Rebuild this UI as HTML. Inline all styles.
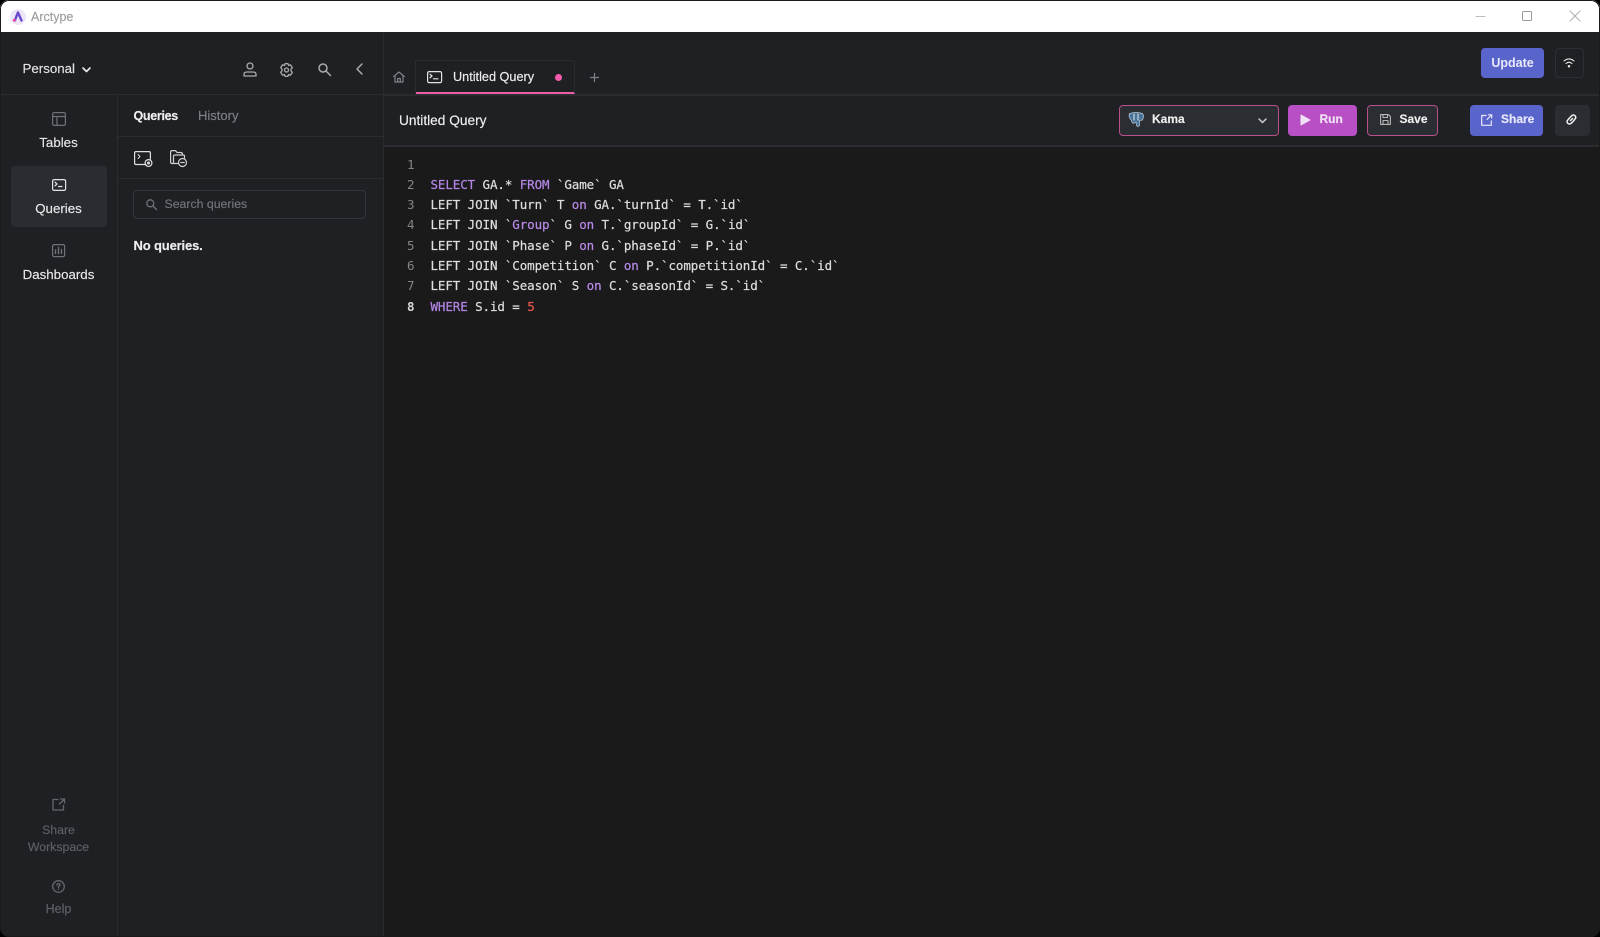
<!DOCTYPE html>
<html><head><meta charset="utf-8"><style>
html,body{margin:0;padding:0;width:1600px;height:937px;overflow:hidden;background:#000}
*{box-sizing:border-box}
#w{position:absolute;left:0;top:0;width:1600px;height:937px;background:#1f2023;border-radius:9px;overflow:hidden;font-family:"Liberation Sans",sans-serif;color:#fff;font-size:13px}
#f{position:absolute;left:0;top:0;width:1600px;height:937px;border:1px solid #1a1a1a;border-radius:9px}
.a{position:absolute;white-space:nowrap}
.t{position:absolute;white-space:nowrap;line-height:18px;height:18px;-webkit-text-stroke:.15px currentColor}
.l{position:absolute;background:#2a2c30}
svg{position:absolute;fill:none;stroke-linecap:round;stroke-linejoin:round;overflow:visible}
.code{position:absolute;left:430.5px;font:12.5px/20px "DejaVu Sans Mono",monospace;letter-spacing:-.09px;color:#dedede;white-space:pre;height:20px;-webkit-text-stroke:.2px currentColor}
.n{position:absolute;left:393.5px;width:21px;text-align:right;font:12.5px/20px "DejaVu Sans Mono",monospace;color:#858585;height:20px}
.k{color:#b486e6}.p{color:#b98ae8}.r{color:#e8574f}
</style></head><body><div id="w">
<div class="a" style="left:0;top:0;width:1600px;height:33px;background:#fff;border-bottom:1px solid #222"></div>
<svg style="left:9px;top:8px" width="18" height="18" viewBox="0 0 18 18"><circle cx="9" cy="9" r="8" fill="#ece6f8"/><path d="M9 4.5L5.8 12.5M9 4.5L12.5 12.5" stroke="#6a4bd0" stroke-width="2.4"/><circle cx="5.2" cy="12.2" r="1.5" fill="#ef4fa6"/></svg>
<div class="t" style="left:31px;top:8px;font-size:12.5px;color:#9c9c9c">Arctype</div>
<svg style="left:1476px;top:11px" width="9" height="10"><path d="M0 5.5H9" stroke="#bdbdbd"/></svg>
<svg style="left:1522px;top:11px" width="10" height="10"><rect x=".5" y=".5" width="9" height="9" rx="1" stroke="#9a9a9a"/></svg>
<svg style="left:1570px;top:11px" width="10" height="10"><path d="M0 0L10 10M10 0L0 10" stroke="#b0b0b0"/></svg>

<div class="l" style="left:0;top:94px;width:383px;height:1px"></div>
<div class="l" style="left:117px;top:94px;width:1px;height:843px"></div>
<div class="l" style="left:383px;top:33px;width:1px;height:904px"></div>
<div class="l" style="left:117px;top:136px;width:266px;height:1px"></div>
<div class="l" style="left:117px;top:178px;width:266px;height:1px"></div>
<div class="l" style="left:384px;top:94px;width:1216px;height:2px"></div>
<div class="l" style="left:384px;top:145px;width:1216px;height:2px"></div>
<div class="a" style="left:384px;top:147px;width:1216px;height:790px;background:#1a1a1b"></div>

<div class="t" style="left:22.5px;top:60px;font-size:13.3px;color:#e4e4e4">Personal</div>
<svg style="left:82px;top:66.5px" width="9" height="6"><path d="M1 1L4.5 4.5L8 1" stroke="#eee" stroke-width="1.6"/></svg>
<svg style="left:243px;top:62px" width="14" height="15" stroke="#a9abaf" stroke-width="1.3"><circle cx="7" cy="4" r="3"/><path d="M1 14V12.5Q1 10 4 10H10Q13 10 13 12.5V14Z"/></svg>
<svg style="left:280px;top:63px" width="13" height="14" stroke="#a9abaf" stroke-width="1.3"><path d="M5 .7H8L8.6 2.5L10.4 1.8L12.3 4.6L11 6.2V7.8L12.3 9.4L10.4 12.2L8.6 11.5L8 13.3H5L4.4 11.5L2.6 12.2L.7 9.4L2 7.8V6.2L.7 4.6L2.6 1.8L4.4 2.5Z"/><circle cx="6.5" cy="7" r="2"/></svg>
<svg style="left:318px;top:63px" width="13" height="13" stroke="#a9abaf" stroke-width="1.5"><circle cx="5" cy="5" r="4"/><path d="M8 8L12.5 12.5"/></svg>
<svg style="left:356px;top:63px" width="7" height="12"><path d="M6 1L1 6L6 11" stroke="#a9abaf" stroke-width="1.5"/></svg>

<svg style="left:52px;top:112px" width="14" height="14" stroke="#6f7278" stroke-width="1.2"><rect x=".6" y=".6" width="12.8" height="12.8" rx="1.5"/><path d="M.6 4.5H13.4M5 4.5V13.4"/></svg>
<div class="t" style="left:0;width:117px;text-align:center;top:134px;font-size:13.3px;color:#e8e8e8">Tables</div>
<div class="a" style="left:11px;top:166px;width:96px;height:61px;background:#2a2c31;border-radius:4px"></div>
<svg style="left:52px;top:179px" width="14" height="12" stroke="#e4e4e4" stroke-width="1.2"><rect x=".6" y=".6" width="13" height="10.8" rx="1.5"/><path d="M3 3.2L5 5L3 6.8M6.5 7.5H10"/></svg>
<div class="t" style="left:0;width:117px;text-align:center;top:200px;font-size:13.3px;color:#e8e8e8">Queries</div>
<svg style="left:52px;top:244px" width="13" height="13" stroke="#6f7278" stroke-width="1.2"><rect x=".6" y=".6" width="12" height="12" rx="1.5"/><path d="M3.5 9.5V6M6.5 9.5V3.5M9.5 9.5V5.5" stroke-width="1.4"/></svg>
<div class="t" style="left:0;width:117px;text-align:center;top:266px;font-size:13.3px;color:#e8e8e8">Dashboards</div>

<svg style="left:52px;top:798px" width="13" height="13" stroke="#63666c" stroke-width="1.3"><path d="M6 1.5H1V12H11.5V7.5M7.5 6L12.5 1M8.5 1H12.5V5"/></svg>
<div class="t" style="left:0;width:117px;text-align:center;top:821px;font-size:12.3px;color:#5d6066">Share</div>
<div class="t" style="left:0;width:117px;text-align:center;top:838px;font-size:12.3px;color:#5d6066">Workspace</div>
<svg style="left:52px;top:880px" width="13" height="13" stroke="#63666c" stroke-width="1.3"><circle cx="6.5" cy="6.5" r="5.8"/><path d="M5 5.2Q5 3.6 6.5 3.6Q8 3.6 8 5Q8 6 6.5 6.6V7.5M6.5 9.3V9.4"/></svg>
<div class="t" style="left:0;width:117px;text-align:center;top:899.5px;font-size:12.5px;color:#5d6066">Help</div>

<div class="t" style="left:133.5px;top:107px;font-size:12.5px;color:#eee;font-weight:bold;letter-spacing:-.3px">Queries</div>
<div class="t" style="left:198px;top:107px;font-size:13px;color:#7d8086">History</div>
<svg style="left:134px;top:151px" width="19" height="16" stroke="#e0e0e0" stroke-width="1.2"><path d="M12 13.5H2Q.6 13.5 .6 12V2Q.6.6 2 .6H15Q16.4.6 16.4 2V8"/><path d="M4 3.5L6 5.5L4 7.5" stroke-width="1"/><circle cx="14.5" cy="12" r="3.4"/><circle cx="14.5" cy="12" r=".9" fill="#e0e0e0"/></svg>
<svg style="left:170px;top:150px" width="18" height="18" stroke="#d0d0d0" stroke-width="1.2"><path d="M8 13.5H2Q.6 13.5 .6 12V2Q.6.6 2 .6H5.5L7 2.5H11Q12.4 2.5 12.4 4V5"/><path d="M3.5 13V6Q3.5 5 5 5H13Q14.5 5 14.5 6V8"/><circle cx="12.5" cy="12.5" r="4"/><path d="M10.8 12.5H14.2"/></svg>
<div class="a" style="left:133px;top:190px;width:233px;height:29px;border:1px solid #33363b;border-radius:4px"></div>
<svg style="left:146px;top:199px" width="11" height="11" stroke="#6f7278" stroke-width="1.3"><circle cx="4.3" cy="4.3" r="3.5"/><path d="M7 7L10.5 10.5"/></svg>
<div class="t" style="left:164.5px;top:195px;font-size:12.3px;color:#72757b">Search queries</div>
<div class="t" style="left:133.5px;top:237px;font-size:13px;color:#eee;font-weight:bold;letter-spacing:-.15px">No queries.</div>

<svg style="left:393px;top:71px" width="12" height="12" stroke="#7d8086" stroke-width="1.2"><path d="M.7 5.5L6 1L11.3 5.5M2 4.5V11H10V4.5M4.7 11V7.5H7.3V11"/></svg>
<div class="l" style="left:415px;top:60px;width:1px;height:33px"></div>
<div class="a" style="left:416px;top:60px;width:159px;height:34px;border:1px solid #2a2c30;border-left:0;border-radius:0 4px 0 0;border-bottom:2px solid #ec5fa5"></div>
<svg style="left:427px;top:71px" width="15" height="12" stroke="#e4e4e4" stroke-width="1.2"><rect x=".6" y=".6" width="14" height="11" rx="1.5"/><path d="M3 3.2L5 5L3 6.8M6.5 7.8H11"/></svg>
<div class="t" style="left:453px;top:67.5px;font-size:12.7px;color:#eee">Untitled Query</div>
<div class="a" style="left:555px;top:74px;width:7px;height:7px;border-radius:50%;background:#f45cab"></div>
<svg style="left:589.5px;top:72.5px" width="9" height="9"><path d="M4.5 .5V8.5M.5 4.5H8.5" stroke="#7d8086" stroke-width="1.2"/></svg>
<div class="t" style="left:399px;top:112px;font-size:13.7px;color:#f0f0f0">Untitled Query</div>

<div class="a" style="left:1481px;top:48px;width:63px;height:30px;background:#5a65cc;border-radius:4px;text-align:center;font:bold 12.5px/30px 'Liberation Sans',sans-serif;color:#e8e9fb">Update</div>
<div class="a" style="left:1555px;top:48px;width:29px;height:30px;border:1px solid #2c2e33;border-radius:4px"></div>
<svg style="left:1563px;top:58px" width="12" height="10" stroke="#e6e6e6" stroke-width="1.1"><path d="M1 3Q6-1.2 11 3M3 5.5Q6 3 9 5.5"/><circle cx="6" cy="8.3" r=".7" fill="#e6e6e6"/></svg>

<div class="a" style="left:1119px;top:105px;width:160px;height:31px;background:#2a2d31;border:1px solid #b8508a;border-radius:4px"></div>
<svg style="left:1128px;top:112px" width="16" height="15"><path d="M1.5 1.5Q8-.5 14.5 1.5Q16.5 4 14.5 8L11.5 8.5V13.5Q9.5 15.5 8.5 13.5L8 10L5.5 11.5Q3.5 10.5 3.5 8.5Q0 5 1.5 1.5Z" fill="#4a7398" stroke="#b9ccdc" stroke-width=".7"/><path d="M6 2V8M10 2V8" stroke="#dde8f0" stroke-width="1"/></svg>
<div class="t" style="left:1152px;top:110px;font-size:12px;font-weight:bold;color:#eee">Kama</div>
<svg style="left:1258px;top:117.5px" width="9" height="6"><path d="M1 1L4.5 4.5L8 1" stroke="#ccc" stroke-width="1.5"/></svg>
<div class="a" style="left:1288px;top:105px;width:69px;height:31px;background:#b84fc4;border-radius:4px"></div>
<svg style="left:1300px;top:114px" width="11" height="12"><path d="M1 1L10 6L1 11Z" fill="#f1e1f5" stroke="#f1e1f5" stroke-width="1"/></svg>
<div class="t" style="left:1319.5px;top:110px;font-size:12px;font-weight:bold;color:#f1e1f5">Run</div>
<div class="a" style="left:1367px;top:105px;width:71px;height:31px;background:#2a2d31;border:1px solid #b8508a;border-radius:4px"></div>
<svg style="left:1380px;top:114px" width="11" height="11" stroke="#b5b5b5" stroke-width="1.1"><path d="M.6.6H8.5L10.4 2.5V10.4H.6Z"/><path d="M3 .8V3.5H7.5V.8M3 10V6.5H8V10"/></svg>
<div class="t" style="left:1399.5px;top:110px;font-size:12px;font-weight:bold;color:#eee">Save</div>
<div class="a" style="left:1470px;top:105px;width:73px;height:31px;background:#5a65cc;border-radius:4px"></div>
<svg style="left:1481px;top:114px" width="11" height="12" stroke="#e8e9fb" stroke-width="1.2"><path d="M5 1.5H.7V11.3H10.3V7M6 5.5L10.5 1M7.5.8H10.7V4"/></svg>
<div class="t" style="left:1501px;top:110px;font-size:12px;font-weight:bold;color:#e8e9fb">Share</div>
<div class="a" style="left:1555px;top:105px;width:35px;height:31px;background:#2a2d31;border-radius:4px"></div>
<svg style="left:1566px;top:114px" width="11" height="11" stroke="#f0f0f0" stroke-width="1.5"><path d="M4.5 6.5L6.5 4.5M4 3.5L5.8 1.7Q7.3.3 9 1.7Q10.5 3.4 9 5L7.5 7M7 7.5L5.2 9.3Q3.5 10.7 1.8 9.3Q.3 7.6 1.8 6L3.5 4"/></svg>

<div class="n" style="top:155px">1</div>
<div class="n" style="top:175px">2</div>
<div class="n" style="top:195px">3</div>
<div class="n" style="top:215px">4</div>
<div class="n" style="top:236px">5</div>
<div class="n" style="top:256px">6</div>
<div class="n" style="top:276px">7</div>
<div class="n" style="top:297px;color:#d8d8d8;font-weight:bold">8</div>
<div class="code" style="top:175px"><span class="k">SELECT</span> GA.* <span class="k">FROM</span> `Game` GA</div>
<div class="code" style="top:195px">LEFT JOIN `Turn` T <span class="p">on</span> GA.`turnId` = T.`id`</div>
<div class="code" style="top:215px">LEFT JOIN `<span class="p">Group</span>` G <span class="p">on</span> T.`groupId` = G.`id`</div>
<div class="code" style="top:236px">LEFT JOIN `Phase` P <span class="p">on</span> G.`phaseId` = P.`id`</div>
<div class="code" style="top:256px">LEFT JOIN `Competition` C <span class="p">on</span> P.`competitionId` = C.`id`</div>
<div class="code" style="top:276px">LEFT JOIN `Season` S <span class="p">on</span> C.`seasonId` = S.`id`</div>
<div class="code" style="top:297px"><span class="k">WHERE</span> S.id = <span class="r">5</span></div>
<div id="f"></div>
</div></body></html>
